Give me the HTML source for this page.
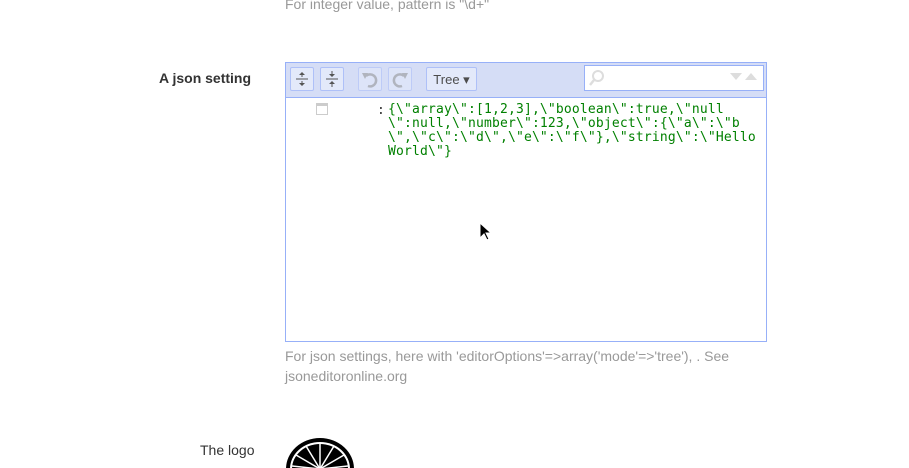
<!DOCTYPE html>
<html style="overflow:hidden"><head><style>
body{margin:0;width:909px;height:468px;overflow:hidden;background:#fff;font-family:"Liberation Sans",sans-serif;position:relative}
.a{position:absolute}
.help{color:#999;font-size:14px;line-height:20px}
.btn{position:absolute;top:67px;width:24px;height:24px;border:1px solid #aec0f8;background:#e3e9fa;border-radius:2px;box-sizing:border-box}
</style></head><body>
<div class="a help" style="left:285px;top:-6px">For integer value, pattern is "\d+"</div>
<div class="a" style="left:159px;top:70px;font-size:14px;font-weight:bold;color:#333">A json setting</div>
<div class="a" style="left:285px;top:62px;width:480px;height:278px;border:1px solid #97b0f8;background:#fff"></div>
<div class="a" style="left:286px;top:63px;width:480px;height:34px;background:#d5ddf6;border-bottom:1px solid #97b0f8"></div>
<div class="btn" style="left:290px"><svg width="22" height="22"><g stroke="#555" fill="#555"><line x1="5" y1="11" x2="17" y2="11"/><path d="M11 4l-3 3h6z M11 18l-3-3h6z" stroke="none"/><line x1="11" y1="6" x2="11" y2="9"/><line x1="11" y1="13" x2="11" y2="16"/></g></svg></div>
<div class="btn" style="left:320px"><svg width="22" height="22"><g stroke="#555" fill="#555"><line x1="5" y1="11" x2="17" y2="11"/><path d="M11 9l-3-3h6z M11 13l-3 3h6z" stroke="none"/><line x1="11" y1="3" x2="11" y2="7"/><line x1="11" y1="15" x2="11" y2="19"/></g></svg></div>
<div class="btn" style="left:358px;opacity:.6"><svg width="22" height="22"><path d="M7 8a6 6 0 1 1 2 10" fill="none" stroke="#999" stroke-width="2.5"/><path d="M3 5l6 0-3 6z" fill="#999"/></svg></div>
<div class="btn" style="left:388px;opacity:.6"><svg width="22" height="22"><path d="M15 8a6 6 0 1 0-2 10" fill="none" stroke="#999" stroke-width="2.5"/><path d="M19 5l-6 0 3 6z" fill="#999"/></svg></div>
<div class="btn" style="left:426px;width:51px;font-size:13px;color:#4d4d4d;text-align:center;line-height:24px">Tree ▾</div>
<div class="a" style="left:584px;top:65px;width:178px;height:24px;border:1px solid #97b0f8;background:#fff"><svg width="178" height="24"><circle cx="13" cy="10" r="5" fill="none" stroke="#ddd" stroke-width="2"/><line x1="9" y1="14" x2="5" y2="19" stroke="#ddd" stroke-width="2.5"/><path d="M145 7h12l-6 7z M160 14h12l-6-7z" fill="#ddd"/></svg></div>
<div class="a" style="left:316px;top:103px;width:12px;height:12px;border:1px solid #ccc;box-sizing:border-box;border-top-width:3px"></div>
<div class="a" style="left:377px;top:103px;font-family:'DejaVu Sans Mono',monospace;font-size:13px;color:#333">:</div>
<div class="a" style="left:388px;top:103px;font-family:'DejaVu Sans Mono',monospace;font-size:13px;letter-spacing:0.17px;line-height:14px;color:#008000;white-space:pre">{\"array\":[1,2,3],\"boolean\":true,\"null
\":null,\"number\":123,\"object\":{\"a\":\"b
\",\"c\":\"d\",\"e\":\"f\"},\"string\":\"Hello
World\"}</div>
<div class="a help" style="left:285px;top:346px">For json settings, here with 'editorOptions'=&gt;array('mode'=&gt;'tree'), . See<br>jsoneditoronline.org</div>
<div class="a" style="left:200px;top:442px;font-size:14px;color:#333">The logo</div>
<svg class="a" style="left:284px;top:437px" width="74" height="31"><ellipse cx="36" cy="32" rx="34" ry="31" fill="#000"/><ellipse cx="36" cy="32" rx="30" ry="27" fill="#fff"/><ellipse cx="36" cy="32" rx="28" ry="25" fill="#000"/><g stroke="#fff" stroke-width="1.5"><line x1="36" y1="32" x2="36" y2="6"/><line x1="36" y1="32" x2="22" y2="9"/><line x1="36" y1="32" x2="50" y2="9"/><line x1="36" y1="32" x2="12" y2="18"/><line x1="36" y1="32" x2="60" y2="18"/><line x1="36" y1="32" x2="8" y2="29"/><line x1="36" y1="32" x2="64" y2="29"/></g></svg>
<svg class="a" style="left:479px;top:222px" width="12" height="20"><path d="M1 1v15l4-4 3 6 2-1-3-6h5z" fill="#000" stroke="#fff"/></svg>
</body></html>
